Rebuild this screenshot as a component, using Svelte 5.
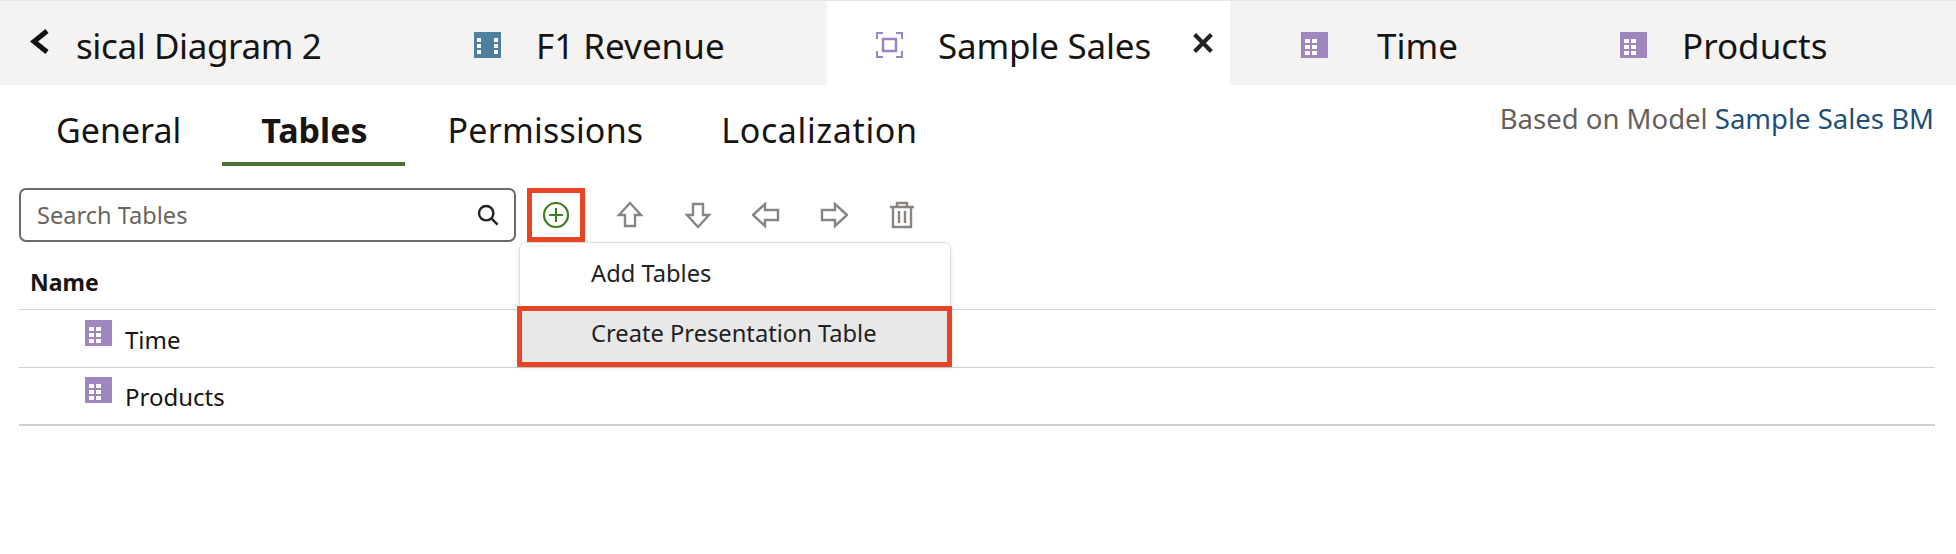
<script lang="ts">
  // Presentation layer editor, Tables tab
  const subTabs = [
    { label: 'General', cls: 'general' },
    { label: 'Tables', cls: 'tables' },
    { label: 'Permissions', cls: 'permissions' },
    { label: 'Localization', cls: 'localization' }
  ];
  const rows = ['Time', 'Products'];
</script>

{#snippet dimIcon()}
  <svg class="tbl-icon" viewBox="0 0 27 26" aria-hidden="true">
    <rect width="27" height="26" fill="#9f86bf" />
    <g fill="#fff">
      <rect x="4" y="7" width="5" height="4" /><rect x="11" y="7" width="5" height="4" />
      <rect x="4" y="13" width="5" height="4" /><rect x="11" y="13" width="5" height="4" />
      <rect x="4" y="19" width="5" height="4" /><rect x="11" y="19" width="5" height="4" />
    </g>
  </svg>
{/snippet}

<div class="page">
  <div class="doc-tabs">
    <div class="doc-tab first">
      <svg class="chevron" viewBox="0 0 21 27" aria-hidden="true">
        <path d="M18 3 5 13.5 18 24" fill="none" stroke="#111" stroke-width="5" />
      </svg>
      <span>sical Diagram 2</span>
    </div>
    <div class="doc-tab fact">
      <svg class="tbl-icon" viewBox="0 0 27 26" aria-hidden="true">
        <rect width="27" height="26" fill="#4d7f9e" />
        <g fill="#fff">
          <rect x="3" y="6" width="4" height="4" /><rect x="20" y="6" width="4" height="4" />
          <rect x="3" y="12" width="4" height="4" /><rect x="20" y="12" width="4" height="4" />
          <rect x="3" y="18" width="4" height="4" /><rect x="20" y="18" width="4" height="4" />
        </g>
      </svg>
      <span>F1 Revenue</span>
    </div>
    <div class="doc-tab active">
      <svg class="tbl-icon" viewBox="0 0 27 26" aria-hidden="true">
        <g fill="none" stroke="#9b84c4" stroke-width="2">
          <path d="M1 7V1h6M20 1h6v6M26 19v6h-6M7 25H1v-6" />
          <rect x="7" y="7" width="13" height="12" stroke-width="2.5" />
        </g>
      </svg>
      <span>Sample Sales</span>
      <svg class="close" viewBox="0 0 20 20" aria-hidden="true">
        <path d="M3 3l14 14M17 3 3 17" stroke="#222" stroke-width="3.5" />
      </svg>
    </div>
    <div class="doc-tab dim">{@render dimIcon()}<span>Time</span></div>
    <div class="doc-tab dim">{@render dimIcon()}<span>Products</span></div>
  </div>

  <div class="sub-header">
    <nav class="sub-tabs">
      {#each subTabs as t}
        <div class="sub-tab {t.cls}">{t.label}</div>
      {/each}
    </nav>
    <div class="based">Based on Model <a href="#model">Sample Sales BM</a></div>
  </div>

  <div class="toolbar">
    <div class="search">
      <span>Search Tables</span>
      <svg viewBox="0 0 20 20" aria-hidden="true">
        <circle cx="8.5" cy="8.5" r="6" fill="none" stroke="#222" stroke-width="2" />
        <path d="M13 13l5 5" stroke="#222" stroke-width="2" />
      </svg>
    </div>
    <div class="add-btn">
      <svg viewBox="0 0 28 28" aria-hidden="true">
        <circle cx="14" cy="14" r="12" fill="none" stroke="#3f7d20" stroke-width="2.2" />
        <path d="M14 7v14M7 14h14" stroke="#3f7d20" stroke-width="2.2" />
      </svg>
    </div>
    <div class="actions">
      <svg viewBox="0 0 28 28" aria-hidden="true"><path d="M14 2 3 14h6v11h10V14h6z" /></svg>
      <svg viewBox="0 0 28 28" aria-hidden="true"><path d="M14 26 3 14h6V3h10v11h6z" /></svg>
      <svg viewBox="0 0 28 28" aria-hidden="true"><path d="M1 14 13 3v6h13v10H13v6z" /></svg>
      <svg viewBox="0 0 28 28" aria-hidden="true"><path d="M27 14 15 3v6H2v10h13v6z" /></svg>
      <svg viewBox="0 0 28 28" aria-hidden="true"><path d="M2 6h24M9 6V2h10v4M5 6v20h18V6M11 10v12M17 10v12" /></svg>
    </div>
  </div>

  <div class="table">
    <div class="head">Name</div>
    {#each rows as r}
      <div class="row">{@render dimIcon()}<span>{r}</span></div>
    {/each}
  </div>

  <div class="menu">
    <div class="menu-item">Add Tables</div>
    <div class="menu-item picked">Create Presentation Table</div>
  </div>
</div>

<style>
  :global(body) {
    margin: 0;
    background: #fff;
  }

  .page {
    position: relative;
    width: 1956px;
    height: 554px;
    overflow: hidden;
    font-family: "Noto Sans", "Open Sans", sans-serif;
    color: #161513;
  }

  /* Document tabs */
  .doc-tabs {
    display: grid;
    grid-template-columns: 425px 402px 403px 319px 1fr;
    height: 84px;
    background: #f4f3f1;
    border-top: 1px solid #e6e6e6;
    font-size: 35px;
  }

  .doc-tab {
    box-sizing: border-box;
    display: flex;
    align-items: center;
    padding-top: 4px;
    white-space: nowrap;
  }

  .tbl-icon {
    flex: none;
    width: 27px;
    height: 26px;
  }

  .first {
    padding-left: 29px;
    letter-spacing: -0.4px;
  }

  .chevron {
    width: 21px;
    height: 27px;
    margin: -7px 26px 0 0;
  }

  .fact {
    padding-left: 49px;
    gap: 35px;
  }

  .active {
    padding-left: 49px;
    gap: 35px;
    background: #fff;
    letter-spacing: -0.2px;
  }

  .close {
    width: 24px;
    height: 24px;
    margin: -4px 0 0 5px;
  }

  .dim {
    padding-left: 71px;
    gap: 49px;
  }

  .dim + .dim {
    gap: 35px;
  }

  /* Sub tabs */
  .sub-header {
    display: flex;
    justify-content: space-between;
    height: 81px;
  }

  .sub-tabs {
    display: flex;
    align-items: stretch;
    padding-left: 56px;
    font-size: 34px;
  }

  .sub-tab {
    line-height: 91px;
    height: 81px;
    box-sizing: border-box;
  }

  .general {
    margin-right: 80px;
  }

  .tables {
    position: relative;
    margin-right: 80px;
    font-weight: 700;
  }

  .tables::after {
    content: "";
    position: absolute;
    left: -39px;
    right: -37px;
    bottom: 0;
    height: 4px;
    background: #4f7035;
  }

  .permissions {
    margin-right: 78px;
    letter-spacing: 0.2px;
  }

  .localization {
    letter-spacing: 0.6px;
  }

  .based {
    padding: 17px 22px 0 0;
    font-size: 27.5px;
    line-height: 34px;
    color: #665f5b;
  }

  .based a {
    color: #1f5077;
    text-decoration: none;
  }

  /* Toolbar */
  .toolbar {
    display: flex;
    align-items: center;
    height: 56px;
    padding: 21px 0 0 19px;
  }

  .search {
    box-sizing: border-box;
    display: flex;
    align-items: center;
    justify-content: space-between;
    width: 497px;
    height: 54px;
    padding: 0 14px 0 16px;
    border: 2px solid #6f6a65;
    border-radius: 7px;
    font-size: 23.6px;
    color: #6b6560;
  }

  .search svg {
    width: 24px;
    height: 24px;
  }

  .add-btn {
    box-sizing: border-box;
    display: flex;
    align-items: center;
    justify-content: center;
    width: 58px;
    height: 54px;
    margin-left: 11px;
    border: 5px solid #ea4427;
  }

  .add-btn svg {
    width: 28px;
    height: 28px;
  }

  .actions {
    display: flex;
    gap: 40px;
    margin-left: 31px;
  }

  .actions svg {
    width: 28px;
    height: 28px;
    fill: none;
    stroke: #8a8581;
    stroke-width: 2.4;
  }

  /* Table */
  .table {
    margin: 14px 21px 0 19px;
    font-size: 24px;
  }

  .head {
    box-sizing: border-box;
    height: 53px;
    padding: 8px 0 0 11px;
    font-size: 23px;
    font-weight: 700;
    line-height: 34px;
    border-bottom: 1px solid #d6d6d6;
  }

  .row {
    box-sizing: border-box;
    display: flex;
    align-items: center;
    gap: 13px;
    height: 58px;
    padding: 0 0 0 66px;
    border-bottom: 1px solid #cfcfcf;
  }

  .row:last-child {
    border-bottom-width: 2px;
  }

  .row .tbl-icon {
    margin-top: -12px;
  }

  .row span {
    margin-top: 1px;
  }

  /* Dropdown */
  .menu {
    position: absolute;
    left: 519px;
    top: 242px;
    width: 430px;
    background: #fff;
    border: 1px solid #e2dfdb;
    border-radius: 7px 7px 0 0;
    box-shadow: 0 2px 5px rgba(0, 0, 0, 0.12);
    font-size: 23.7px;
  }

  .menu-item {
    box-sizing: border-box;
    height: 63px;
    padding: 13px 0 0 71px;
    line-height: 34px;
    color: #222;
  }

  .picked {
    height: 61px;
    margin: 0 -2px -2px -3px;
    background: #e8e8e8;
    border: 5px solid #ea4427;
    padding: 5px 0 0 69px;
  }
</style>
